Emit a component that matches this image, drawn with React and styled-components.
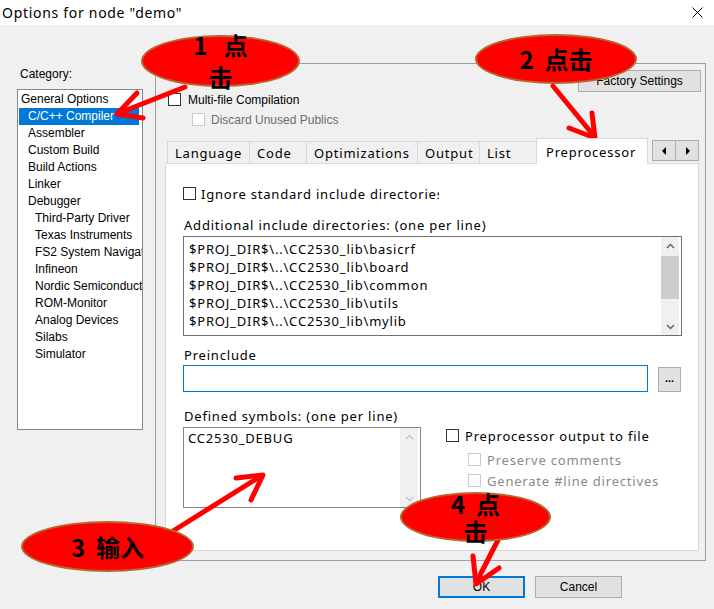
import React from 'react';
import styled, { createGlobalStyle } from 'styled-components';

const classic = `"Liberation Sans", Arial, sans-serif`;
const modern = `"Noto Sans", "Open Sans", sans-serif`;
const cjk = `"Noto Sans CJK SC", "Noto Sans", sans-serif`;

const GlobalStyle = createGlobalStyle`
  html, body { margin: 0; padding: 0; background: #f0f0f0; overflow: hidden; }
  #root { width: 714px; height: 609px; }
  *, *::before, *::after { box-sizing: border-box; }
`;

const Window = styled.div`
  position: relative;
  width: 714px;
  height: 609px;
  background: #f0f0f0;
  display: flex;
  flex-direction: column;
  overflow: hidden;
`;

const TitleBar = styled.div`
  height: 25px;
  flex-shrink: 0;
  background: #fff;
  display: flex;
  align-items: center;
  justify-content: space-between;
  padding: 0 11px 0 2px;
`;

const Title = styled.div`
  font-family: ${modern};
  font-size: 14px;
  letter-spacing: 0.7px;
  color: #000;
  line-height: 25px;
`;

const Main = styled.div`
  display: flex;
  align-items: flex-start;
`;

const LeftColumn = styled.div`
  margin-left: 17px;
  padding-top: 42px;
  display: flex;
  flex-direction: column;
`;

const CategoryLabel = styled.div`
  font-family: ${classic};
  font-size: 12px;
  line-height: 14px;
  padding-left: 3px;
  color: #000;
`;

const CategoryList = styled.div`
  margin-top: 8px;
  width: 126px;
  height: 341px;
  background: #fff;
  border: 1px solid #828790;
  padding-top: 1px;
  overflow: hidden;
`;

const TreeItem = styled.div`
  height: 17px;
  line-height: 17px;
  font-family: ${classic};
  font-size: 12px;
  white-space: nowrap;
  overflow: hidden;
  color: ${p => (p.$selected ? '#fff' : '#000')};
  background: ${p => (p.$selected ? '#0078d7' : 'transparent')};
  margin: ${p => (p.$selected ? '0 3px 0 1px' : '0')};
  padding-left: ${p => [3, 10, 17][p.$level] - (p.$selected ? 1 : 0)}px;
`;

const GroupBox = styled.div`
  margin-left: 12px;
  margin-top: 38px;
  width: 551px;
  height: 498px;
  border: 1px solid #a0a0a0;
  display: flex;
  flex-direction: column;
`;

const FactoryRow = styled.div`
  display: flex;
  justify-content: flex-end;
  margin-top: 6px;
  padding-right: 4px;
`;

const PushButton = styled.button`
  width: ${p => p.$w}px;
  height: ${p => p.$h || 22}px;
  background: #e1e1e1;
  border: ${p => (p.$focused ? '2px solid #0078d7' : '1px solid #adadad')};
  font-family: ${classic};
  font-size: 12px;
  color: #000;
  padding: 0;
  margin: 0;
  display: flex;
  align-items: center;
  justify-content: center;
  flex-shrink: 0;
`;

const CheckRow = styled.div`
  display: flex;
  align-items: center;
  height: 13px;
  margin-top: ${p => p.$top || 0}px;
  padding-left: ${p => p.$indent || 0}px;
  gap: ${p => p.$gap || 6}px;
`;

const Box = styled.span`
  width: 13px;
  height: 13px;
  flex-shrink: 0;
  background: #fff;
  border: 1px solid ${p => (p.$disabled ? '#cccccc' : '#333333')};
`;

const ClassicLabel = styled.span`
  font-family: ${classic};
  font-size: 12px;
  line-height: 14px;
  white-space: nowrap;
  color: ${p => (p.$disabled ? '#6d6d6d' : '#000')};
`;

const ModernLabel = styled.span`
  font-family: ${modern};
  font-size: 13px;
  letter-spacing: 0.8px;
  line-height: 16px;
  white-space: nowrap;
  overflow: hidden;
  max-width: ${p => (p.$clip ? `${p.$clip}px` : 'none')};
  color: ${p => (p.$disabled ? '#8a8a8a' : '#000')};
`;

const TabStrip = styled.div`
  margin-top: 12px;
  margin-left: 9px;
  width: 534px;
  height: 25px;
  display: flex;
  align-items: flex-end;
`;

const Tab = styled.div`
  position: relative;
  width: ${p => p.$w}px;
  height: ${p => (p.$active ? 26 : 22)}px;
  margin-left: ${p => (p.$first ? 2 : -1)}px;
  margin-bottom: ${p => (p.$active ? -1 : 0)}px;
  z-index: ${p => (p.$active ? 2 : 1)};
  background: ${p => (p.$active ? '#fff' : '#f0f0f0')};
  border: 1px solid #d9d9d9;
  border-bottom: none;
  padding-left: ${p => (p.$active ? 9 : 7)}px;
  font-family: ${modern};
  font-size: 13px;
  letter-spacing: 0.8px;
  color: #000;
  display: flex;
  align-items: center;
  white-space: nowrap;
  flex-shrink: 0;
`;

const ScrollArrows = styled.div`
  margin-left: auto;
  align-self: flex-start;
  margin-top: 2px;
  display: flex;
`;

const ArrowButton = styled.div`
  width: 24px;
  height: 21px;
  margin-left: ${p => (p.$second ? -1 : 0)}px;
  background: #e1e1e1;
  border: 1px solid #adadad;
  display: flex;
  align-items: center;
  justify-content: center;
`;

const Panel = styled.div`
  margin-left: 9px;
  width: 534px;
  height: 388px;
  background: #fff;
  border: 1px solid #d9d9d9;
  display: flex;
  flex-direction: column;
`;

const FieldLabel = styled.div`
  font-family: ${modern};
  font-size: 13px;
  letter-spacing: 0.8px;
  line-height: 16px;
  color: #000;
  white-space: nowrap;
  margin-top: ${p => p.$top}px;
  padding-left: 18px;
`;

const IncludeList = styled.div`
  margin: 3px 0 0 17px;
  width: 499px;
  height: 100px;
  border: 1px solid #707070;
  display: flex;
`;

const ListBody = styled.div`
  flex: 1;
  padding: 3px 0 0 5px;
  overflow: hidden;
`;

const ListLine = styled.div`
  font-family: ${modern};
  font-size: 13px;
  letter-spacing: 0.8px;
  line-height: 18px;
  height: 18px;
  color: #000;
  white-space: nowrap;
`;

const VScroll = styled.div`
  width: 18px;
  margin: 0 2px 0 0;
  background: #f0f0f0;
  display: flex;
  flex-direction: column;
`;

const ScrollBtn = styled.div`
  height: 17px;
  flex-shrink: 0;
  display: flex;
  align-items: center;
  justify-content: center;
`;

const Thumb = styled.div`
  margin-top: 2px;
  height: 43px;
  background: #cdcdcd;
`;

const Track = styled.div`
  flex: 1;
`;

const InputRow = styled.div`
  display: flex;
  align-items: flex-end;
  margin-top: 2px;
  padding-left: 17px;
  gap: 10px;
`;

const TextInput = styled.div`
  width: 465px;
  height: 27px;
  border: 1px solid #0078d7;
  background: #fff;
`;

const BrowseButton = styled.div`
  width: 23px;
  height: 25px;
  background: #e1e1e1;
  border: 1px solid #adadad;
  display: flex;
  align-items: center;
  justify-content: center;
  font-family: ${classic};
  font-size: 11px;
  font-weight: 700;
  line-height: 1;
  padding-bottom: 2px;
  color: #000;
`;

const LowerRow = styled.div`
  display: flex;
  align-items: flex-start;
  margin-top: 3px;
  padding-left: 17px;
`;

const SymbolsBox = styled.div`
  width: 238px;
  height: 81px;
  border: 1px solid #828282;
  display: flex;
`;

const SymbolsBody = styled.div`
  flex: 1;
  padding: 1px 0 0 4px;
`;

const OptionsColumn = styled.div`
  margin-left: 25px;
  display: flex;
  flex-direction: column;
`;

const ButtonRow = styled.div`
  display: flex;
  justify-content: flex-end;
  gap: 10px;
  margin-top: 15px;
  padding-right: 92px;
`;

const ArrowLayer = styled.svg`
  position: absolute;
  left: 0;
  top: 0;
  width: 714px;
  height: 609px;
  pointer-events: none;
`;

const Callout = styled.div`
  position: absolute;
  left: ${p => p.$x}px;
  top: ${p => p.$y}px;
  width: ${p => p.$w}px;
  height: ${p => p.$h}px;
  border-radius: 50%;
  background: #ff0000;
  border: 2px solid #b8652e;
  display: flex;
  align-items: center;
  justify-content: center;
`;

const CalloutText = styled.div`
  flex-shrink: 0;
  font-family: ${cjk};
  font-weight: 700;
  font-size: 24px;
  line-height: ${p => p.$lh}px;
  color: #000;
  text-align: center;
  white-space: pre;
  margin-left: ${p => p.$dx || 0}px;
`;

const Chevron = ({ up, color }) => (
  <svg width="9" height="6" viewBox="0 0 9 6">
    <polyline
      points={up ? '1,5 4.5,1.5 8,5' : '1,1 4.5,4.5 8,1'}
      fill="none"
      stroke={color}
      strokeWidth="1.4"
    />
  </svg>
);

const Triangle = ({ left }) => (
  <svg width="5" height="8" viewBox="0 0 5 8">
    <polygon points={left ? '4,0 4,8 0,4' : '1,0 1,8 5,4'} fill="#000" />
  </svg>
);

const CloseIcon = () => (
  <svg width="11" height="11" viewBox="0 0 11 11">
    <path d="M0.5 0.5 L10.5 10.5 M10.5 0.5 L0.5 10.5" stroke="#000" strokeWidth="1" fill="none" />
  </svg>
);

const categories = [
  ['General Options', 0],
  ['C/C++ Compiler', 1, true],
  ['Assembler', 1],
  ['Custom Build', 1],
  ['Build Actions', 1],
  ['Linker', 1],
  ['Debugger', 1],
  ['Third-Party Driver', 2],
  ['Texas Instruments', 2],
  ['FS2 System Navigator', 2],
  ['Infineon', 2],
  ['Nordic Semiconductor', 2],
  ['ROM-Monitor', 2],
  ['Analog Devices', 2],
  ['Silabs', 2],
  ['Simulator', 2],
];

const tabs = [
  ['Language', 83],
  ['Code', 58],
  ['Optimizations', 112],
  ['Output', 63],
  ['List', 58],
  ['Preprocessor', 112, true],
];

const includes = ['basicrf', 'board', 'common', 'utils', 'mylib'];

const arrows = [
  ['M185 87 L119 113', 'M137 93 L117 114 L143 118'],
  ['M553 86 L594 136', 'M569 128 L595 138 L592 113'],
  ['M173 531 L261 476', 'M236 478 L263 475 L251 500'],
  ['M498 540 L477 581', 'M473 556 L476 584 L499 568'],
];

export default function App() {
  return (
    <>
      <GlobalStyle />
      <Window>
        <TitleBar>
          <Title>Options for node "demo"</Title>
          <CloseIcon />
        </TitleBar>
        <Main>
          <LeftColumn>
            <CategoryLabel>Category:</CategoryLabel>
            <CategoryList>
              {categories.map(([name, level, sel]) => (
                <TreeItem key={name} $level={level} $selected={sel}>
                  {name}
                </TreeItem>
              ))}
            </CategoryList>
          </LeftColumn>
          <GroupBox>
            <FactoryRow>
              <PushButton $w={123}>Factory Settings</PushButton>
            </FactoryRow>
            <CheckRow $top={1} $indent={12} $gap={7}>
              <Box />
              <ClassicLabel>Multi-file Compilation</ClassicLabel>
            </CheckRow>
            <CheckRow $top={7} $indent={36} $gap={6}>
              <Box $disabled />
              <ClassicLabel $disabled>Discard Unused Publics</ClassicLabel>
            </CheckRow>
            <TabStrip>
              {tabs.map(([name, w, active], i) => (
                <Tab key={name} $w={w} $active={active} $first={i === 0}>
                  {name}
                </Tab>
              ))}
              <ScrollArrows>
                <ArrowButton>
                  <Triangle left />
                </ArrowButton>
                <ArrowButton $second>
                  <Triangle />
                </ArrowButton>
              </ScrollArrows>
            </TabStrip>
            <Panel>
              <CheckRow $top={23} $indent={17} $gap={5}>
                <Box />
                <ModernLabel $clip={238}>Ignore standard include directories</ModernLabel>
              </CheckRow>
              <FieldLabel $top={17}>Additional include directories: (one per line)</FieldLabel>
              <IncludeList>
                <ListBody>
                  {includes.map(n => (
                    <ListLine key={n}>{`$PROJ_DIR$\\..\\CC2530_lib\\${n}`}</ListLine>
                  ))}
                </ListBody>
                <VScroll>
                  <ScrollBtn>
                    <Chevron up color="#606060" />
                  </ScrollBtn>
                  <Thumb />
                  <Track />
                  <ScrollBtn>
                    <Chevron color="#606060" />
                  </ScrollBtn>
                </VScroll>
              </IncludeList>
              <FieldLabel $top={11}>Preinclude</FieldLabel>
              <InputRow>
                <TextInput />
                <BrowseButton>...</BrowseButton>
              </InputRow>
              <FieldLabel $top={16}>Defined symbols: (one per line)</FieldLabel>
              <LowerRow>
                <SymbolsBox>
                  <SymbolsBody>
                    <ListLine>CC2530_DEBUG</ListLine>
                  </SymbolsBody>
                  <VScroll>
                    <ScrollBtn>
                      <Chevron up color="#c4c4c4" />
                    </ScrollBtn>
                    <Track />
                    <ScrollBtn>
                      <Chevron color="#c4c4c4" />
                    </ScrollBtn>
                  </VScroll>
                </SymbolsBox>
                <OptionsColumn>
                  <CheckRow $top={2} $gap={6}>
                    <Box />
                    <ModernLabel>Preprocessor output to file</ModernLabel>
                  </CheckRow>
                  <CheckRow $top={11} $indent={22} $gap={6}>
                    <Box $disabled />
                    <ModernLabel $disabled>Preserve comments</ModernLabel>
                  </CheckRow>
                  <CheckRow $top={8} $indent={22} $gap={6}>
                    <Box $disabled />
                    <ModernLabel $disabled>Generate #line directives</ModernLabel>
                  </CheckRow>
                </OptionsColumn>
              </LowerRow>
            </Panel>
          </GroupBox>
        </Main>
        <ButtonRow>
          <PushButton $w={87} $focused>OK</PushButton>
          <PushButton $w={87}>Cancel</PushButton>
        </ButtonRow>

        <ArrowLayer viewBox="0 0 714 609">
          {arrows.map(([shaft, head], i) => (
            <g key={i} stroke="#ff0000" strokeWidth="5" strokeLinecap="round" strokeLinejoin="round" fill="none">
              <path d={shaft} />
              <path d={head} />
            </g>
          ))}
        </ArrowLayer>

        <Callout $x={141} $y={35} $w={159} $h={52}>
          <CalloutText $lh={32}>{'1   点\n击'}</CalloutText>
        </Callout>
        <Callout $x={475} $y={34} $w={162} $h={50}>
          <CalloutText $lh={30}>{'2  点击'}</CalloutText>
        </Callout>
        <Callout $x={21} $y={521} $w={173} $h={51}>
          <CalloutText $lh={30}>{'3  输入'}</CalloutText>
        </Callout>
        <Callout $x={400} $y={492} $w={151} $h={50}>
          <CalloutText $lh={27}>{'4  点\n击'}</CalloutText>
        </Callout>
      </Window>
    </>
  );
}
